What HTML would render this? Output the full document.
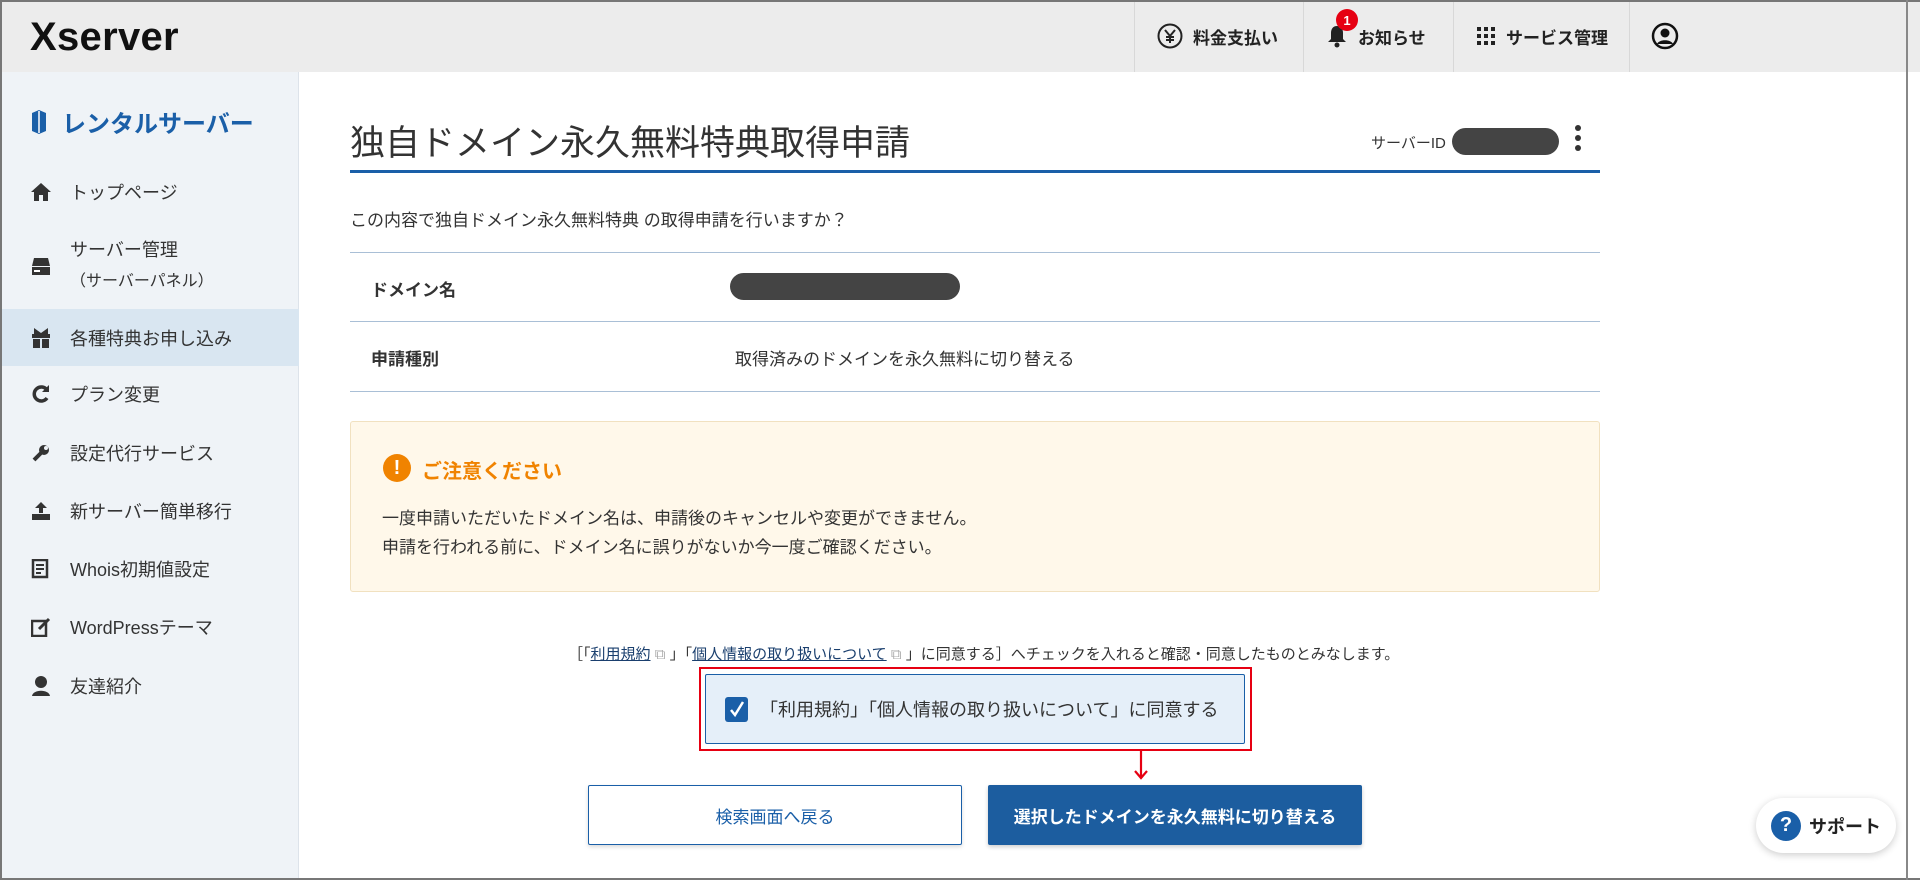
<!DOCTYPE html>
<html><head><meta charset="utf-8"><style>
*{box-sizing:border-box;margin:0;padding:0}
body{width:1920px;height:880px;overflow:hidden;background:#fff;font-family:"Liberation Sans","Noto Sans CJK JP",sans-serif;color:#333;position:relative}
.frame{position:absolute;inset:0;border:2px solid #777;border-right:none;pointer-events:none;z-index:9}
.rline{position:absolute;left:1906px;top:0;width:2px;height:880px;background:#888;z-index:9}
.hdr{position:absolute;left:0;top:0;width:1920px;height:72px;background:#ececec}
.logo{position:absolute;left:30px;top:15px;font-size:40px;font-weight:bold;color:#111;letter-spacing:0.3px}
.hi{position:absolute;top:0;height:72px;border-left:1px solid #d8d8d8;display:flex;align-items:center;font-weight:bold;font-size:17px;color:#222}
.side{position:absolute;left:0;top:72px;width:299px;height:808px;background:#eff3f7;border-right:1px solid #dde3ea}
.brand{position:absolute;left:30px;top:104px;font-size:24px;font-weight:bold;color:#1a5fa8;display:flex;align-items:center;gap:14px}
.mi{position:absolute;left:0;width:299px;display:flex;align-items:center;font-size:18px;color:#333}
.mi .ic{width:22px;margin-left:30px;margin-right:18px;display:flex;justify-content:center}
.title{position:absolute;left:350px;top:115px;font-size:35px;color:#333}
.bar{position:absolute;left:350px;top:170px;width:1250px;height:3px;background:#1a5fa8}
.pill{position:absolute;background:#444;border-radius:14px}
.hl{position:absolute;left:350px;width:1250px;height:1px;background:#a9bfd6}
.lab{position:absolute;left:371px;font-size:17px;font-weight:bold;color:#333}
.val{position:absolute;left:735px;font-size:17px;color:#333}
.note{position:absolute;left:350px;top:421px;width:1250px;height:171px;background:#fff8ea;border:1px solid #f1e1c0;border-radius:3px}
.btn{position:absolute;top:785px;height:60px;display:flex;align-items:center;justify-content:center;font-size:17px;border-radius:2px}
</style></head><body>
<div class="hdr">
 <div class="logo">Xserver</div>
 <div class="hi" style="left:1134px;width:169px;padding-left:22px"><svg width="26" height="26" viewBox="0 0 26 26" style="margin-right:10px"><circle cx="13" cy="13" r="11.5" fill="none" stroke="#222" stroke-width="2"/><path d="M8 7l5 6 5-6M13 13v7M9 14h8M9 17h8" stroke="#222" stroke-width="2" fill="none"/></svg>料金支払い</div>
 <div class="hi" style="left:1303px;width:150px;padding-left:22px"><svg width="22" height="26" viewBox="0 0 22 26" style="margin-right:10px"><path d="M11 3c-4 0-6 3-6 7v6l-3 3h18l-3-3v-6c0-4-2-7-6-7z" fill="#222"/><circle cx="11" cy="22" r="2.5" fill="#222"/></svg>お知らせ
  <div style="position:absolute;left:32px;top:9px;width:22px;height:22px;border-radius:50%;background:#e60012;color:#fff;font-size:13px;display:flex;align-items:center;justify-content:center;font-weight:bold">1</div></div>
 <div class="hi" style="left:1453px;width:176px;padding-left:22px"><svg width="20" height="20" viewBox="0 0 20 20" style="margin-right:10px" fill="#222"><rect x="1" y="1" width="4" height="4"/><rect x="8" y="1" width="4" height="4"/><rect x="15" y="1" width="4" height="4"/><rect x="1" y="8" width="4" height="4"/><rect x="8" y="8" width="4" height="4"/><rect x="15" y="8" width="4" height="4"/><rect x="1" y="15" width="4" height="4"/><rect x="8" y="15" width="4" height="4"/><rect x="15" y="15" width="4" height="4"/></svg>サービス管理</div>
 <div class="hi" style="left:1629px;width:80px;padding-left:21px"><svg width="28" height="28" viewBox="0 0 28 28"><circle cx="14" cy="14" r="12" fill="none" stroke="#111" stroke-width="2.5"/><circle cx="14" cy="11" r="4.5" fill="#111"/><path d="M6 22c2-5 14-5 16 0" fill="#111"/></svg></div>
</div>
<div class="side">
 <div class="brand" style="top:32px"><svg width="18" height="26" viewBox="0 0 18 26"><path d="M2 4l7-3 7 3v18l-7 3-7-3z" fill="#1a5fa8"/><path d="M9 2v22" stroke="#fff" stroke-width="1.5"/></svg>レンタルサーバー</div>
 <div class="mi" style="top:106px;height:28px"><span class="ic"><svg width="22" height="20" viewBox="0 0 22 20"><path d="M11 1L1 10h3v9h5v-6h4v6h5v-9h3z" fill="#333"/></svg></span>トップページ</div>
 <div class="mi" style="top:164px;height:60px;align-items:center"><span class="ic"><svg width="20" height="20" viewBox="0 0 20 20"><path d="M3 2h14l2 8H1z" fill="#333"/><rect x="1" y="11" width="18" height="8" fill="#333"/><rect x="3" y="14" width="6" height="2" fill="#fff"/></svg></span><div style="line-height:30px">サーバー管理<br><span style="font-size:16px">（サーバーパネル）</span></div></div>
 <div class="mi" style="top:237px;height:57px;background:#d9e6f1"><span class="ic"><svg width="20" height="22" viewBox="0 0 20 22"><path d="M3 1l7 5 7-5v6H3z" fill="#333"/><rect x="1" y="7" width="18" height="4" fill="#333"/><rect x="2" y="12" width="7" height="9" fill="#333"/><rect x="11" y="12" width="7" height="9" fill="#333"/></svg></span>各種特典お申し込み</div>
 <div class="mi" style="top:308px;height:28px"><span class="ic"><svg width="18" height="20" viewBox="0 0 18 20"><path d="M15 6A7 7 0 1 0 15 14" fill="none" stroke="#333" stroke-width="3.5"/><path d="M17 1v7h-7z" fill="#333"/></svg></span>プラン変更</div>
 <div class="mi" style="top:367px;height:28px"><span class="ic"><svg width="20" height="20" viewBox="0 0 20 20"><path d="M3 17l8-8" stroke="#333" stroke-width="4"/><circle cx="13" cy="7" r="5" fill="#333"/><circle cx="15" cy="5" r="2" fill="#eff3f7"/></svg></span>設定代行サービス</div>
 <div class="mi" style="top:425px;height:28px"><span class="ic"><svg width="20" height="20" viewBox="0 0 20 20"><path d="M10 1l6 6h-4v5H8V7H4z" fill="#333"/><rect x="1" y="13" width="18" height="6" fill="#333"/></svg></span>新サーバー簡単移行</div>
 <div class="mi" style="top:483px;height:28px"><span class="ic"><svg width="20" height="20" viewBox="0 0 20 20"><rect x="2" y="1" width="14" height="17" fill="none" stroke="#333" stroke-width="2.5"/><path d="M5 6h8M5 10h8M5 14h5" stroke="#333" stroke-width="2"/></svg></span>Whois初期値設定</div>
 <div class="mi" style="top:541px;height:28px"><span class="ic"><svg width="20" height="20" viewBox="0 0 20 20"><rect x="1" y="4" width="14" height="15" fill="none" stroke="#333" stroke-width="2.5"/><path d="M8 12l10-10" stroke="#333" stroke-width="3"/></svg></span>WordPressテーマ</div>
 <div class="mi" style="top:600px;height:28px"><span class="ic"><svg width="20" height="22" viewBox="0 0 20 22"><circle cx="10" cy="7" r="6" fill="#333"/><path d="M1 21c1-7 17-7 18 0z" fill="#333"/></svg></span>友達紹介</div>
</div>
<div class="title">独自ドメイン永久無料特典取得申請</div>
<div style="position:absolute;left:1371px;top:132px;font-size:15px;color:#333">サーバーID</div>
<div class="pill" style="left:1452px;top:128px;width:107px;height:27px"></div>
<div style="position:absolute;left:1575px;top:125px;width:6px"><div style="width:6px;height:6px;border-radius:50%;background:#333;margin-bottom:4px"></div><div style="width:6px;height:6px;border-radius:50%;background:#333;margin-bottom:4px"></div><div style="width:6px;height:6px;border-radius:50%;background:#333"></div></div>
<div class="bar"></div>
<div style="position:absolute;left:350px;top:206px;font-size:17px">この内容で独自ドメイン永久無料特典 の取得申請を行いますか？</div>
<div class="hl" style="top:252px"></div>
<div class="lab" style="top:276px">ドメイン名</div>
<div class="pill" style="left:730px;top:273px;width:230px;height:27px"></div>
<div class="hl" style="top:321px"></div>
<div class="lab" style="top:345px">申請種別</div>
<div class="val" style="top:345px">取得済みのドメインを永久無料に切り替える</div>
<div class="hl" style="top:391px"></div>
<div class="note">
 <div style="position:absolute;left:32px;top:32px;width:28px;height:28px;border-radius:50%;background:#f08300;color:#fff;font-weight:bold;font-size:20px;display:flex;align-items:center;justify-content:center">!</div>
 <div style="position:absolute;left:71px;top:33px;font-size:20px;font-weight:bold;color:#f08300">ご注意ください</div>
 <div style="position:absolute;left:31px;top:82px;font-size:17px;line-height:29px;color:#333">一度申請いただいたドメイン名は、申請後のキャンセルや変更ができません。<br>申請を行われる前に、ドメイン名に誤りがないか今一度ご確認ください。</div>
</div>
<div style="position:absolute;left:568px;top:643px;font-size:15px;color:#333;white-space:nowrap">［「<u style="color:#1a3f6e">利用規約</u> <span style="color:#aaa">⧉</span> 」「<u style="color:#1a3f6e">個人情報の取り扱いについて</u> <span style="color:#aaa">⧉</span> 」に同意する］へチェックを入れると確認・同意したものとみなします。</div>
<div style="position:absolute;left:699px;top:667px;width:553px;height:84px;border:2px solid #e60012"></div>
<div style="position:absolute;left:705px;top:674px;width:540px;height:70px;background:#e5eff9;border:1px solid #1a5fa8;border-radius:2px;display:flex;align-items:center;font-size:18px;color:#333">
 <div style="width:23px;height:25px;background:#1a5fa8;border-radius:3px;margin-left:19px;margin-right:12px;display:flex;align-items:center;justify-content:center"><svg width="16" height="18" viewBox="0 0 16 18"><path d="M2 10l4 5 8-13" stroke="#fff" stroke-width="2.5" fill="none"/></svg></div>「利用規約」「個人情報の取り扱いについて」に同意する</div>
<svg style="position:absolute;left:1133px;top:751px" width="16" height="30" viewBox="0 0 16 30"><path d="M8 0v27M2 20l6 7 6-7" stroke="#e60012" stroke-width="2.2" fill="none"/></svg>
<div class="btn" style="left:588px;width:374px;border:1px solid #1a5fa8;color:#1a5fa8;background:#fff;box-shadow:0 2px 4px rgba(0,0,0,.15)">検索画面へ戻る</div>
<div class="btn" style="left:988px;width:374px;background:#1c5d9f;color:#fff;font-weight:bold;box-shadow:0 2px 4px rgba(0,0,0,.2)">選択したドメインを永久無料に切り替える</div>
<div style="position:absolute;left:1756px;top:798px;width:140px;height:55px;border-radius:28px;background:#fff;box-shadow:0 2px 8px rgba(0,0,0,.2);display:flex;align-items:center;font-weight:bold;font-size:18px;color:#222">
 <div style="width:30px;height:30px;border-radius:50%;background:#1a5fa8;color:#fff;margin-left:15px;margin-right:8px;display:flex;align-items:center;justify-content:center;font-size:20px">?</div>サポート</div>
<div class="frame"></div><div class="rline"></div>
</body></html>
